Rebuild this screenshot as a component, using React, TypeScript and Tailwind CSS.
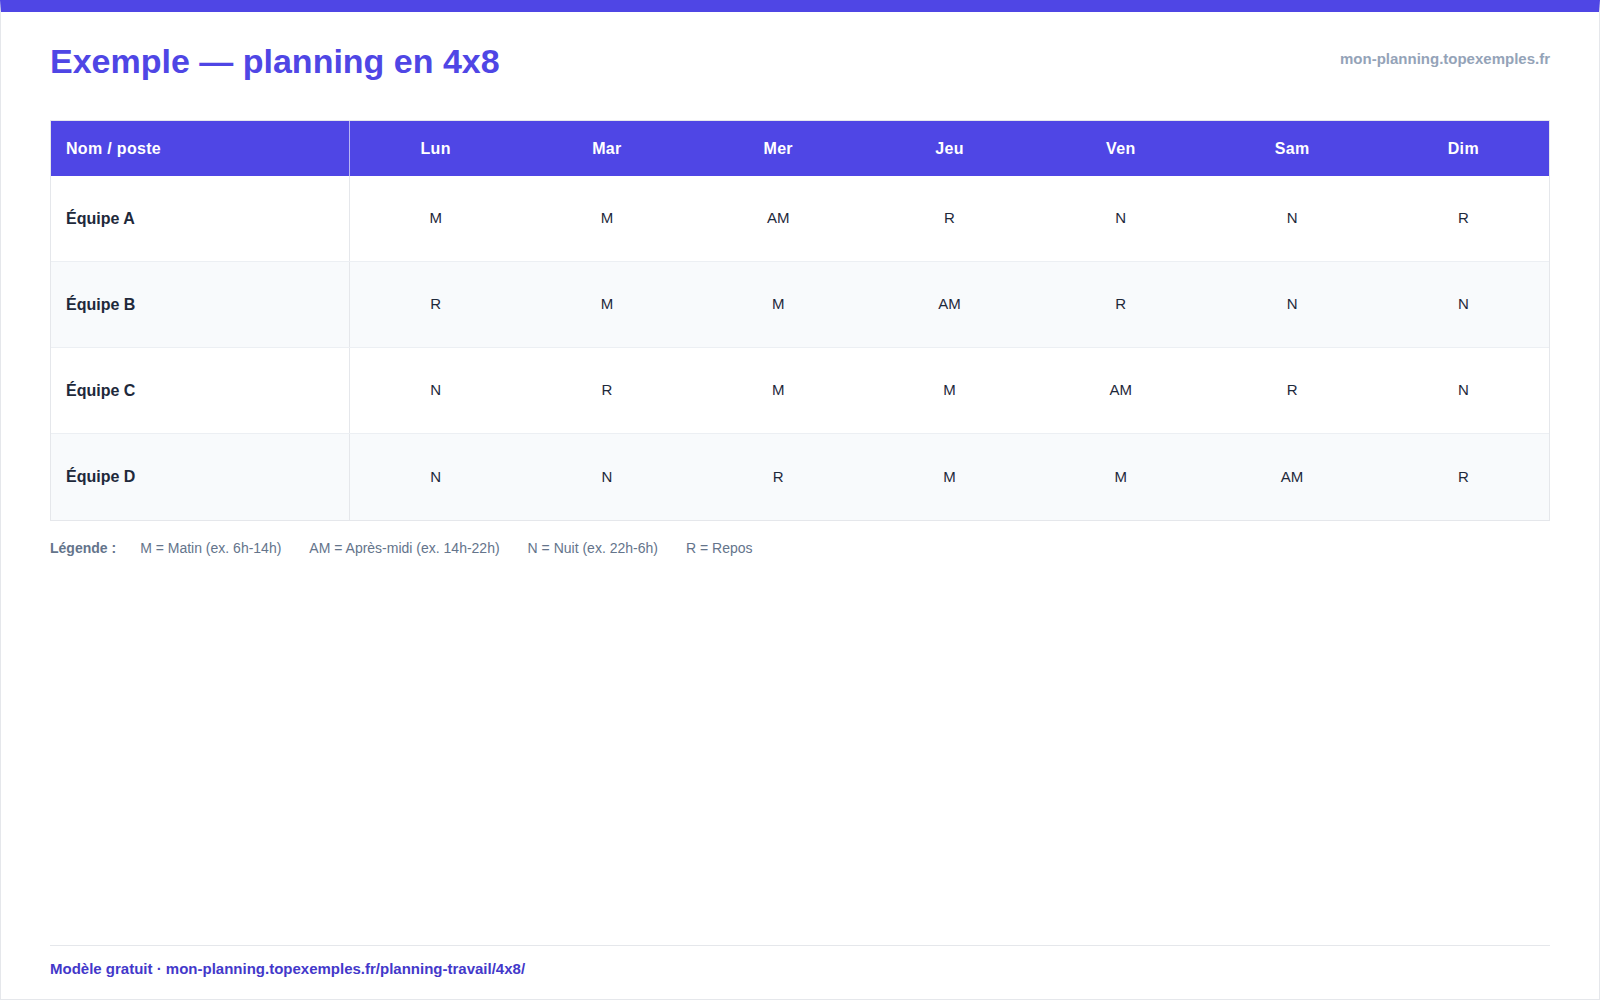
import React from "react";

const days = ["Lun", "Mar", "Mer", "Jeu", "Ven", "Sam", "Dim"];
const rows: { name: string; cells: string[] }[] = [
  { name: "Équipe A", cells: ["M", "M", "AM", "R", "N", "N", "R"] },
  { name: "Équipe B", cells: ["R", "M", "M", "AM", "R", "N", "N"] },
  { name: "Équipe C", cells: ["N", "R", "M", "M", "AM", "R", "N"] },
  { name: "Équipe D", cells: ["N", "N", "R", "M", "M", "AM", "R"] },
];

export default function App() {
  return (
    <div
      className="w-[1600px] h-[1000px] flex flex-col bg-white border border-[#e5e7eb] border-t-[12px] border-t-[#4f46e5] px-[49px]"
      style={{ fontFamily: '"Liberation Sans", Arial, sans-serif' }}
    >
      <div className="flex items-start justify-between pt-[28px]">
        <h1 className="text-[34px] leading-[42px] font-bold text-[#4f46e5]">
          Exemple — planning en 4x8
        </h1>
        <div className="mt-[8px] text-[15px] leading-[22px] font-bold text-[#94a3b8]">
          mon-planning.topexemples.fr
        </div>
      </div>

      <div className="mt-[38px] border border-[#e5e7eb]">
        <div className="grid grid-cols-[299px_repeat(7,1fr)] h-[55px] bg-[#4f46e5] text-white text-[16px] font-bold tracking-[0.02em]">
          <div className="flex items-center pl-[15px] border-r border-r-white/60">
            Nom / poste
          </div>
          {days.map((d) => (
            <div key={d} className="flex items-center justify-center">
              {d}
            </div>
          ))}
        </div>
        {rows.map((r, i) => (
          <div
            key={r.name}
            className={
              "grid grid-cols-[299px_repeat(7,1fr)] h-[86px] border-b border-[#eceff3] last:border-b-0 " +
              (i % 2 === 1 ? "bg-[#f8fafc]" : "bg-white")
            }
          >
            <div className="flex items-center pl-[15px] border-r border-r-[#e5e7eb] text-[16px] font-bold text-[#1e293b]">
              {r.name}
            </div>
            {r.cells.map((c, j) => (
              <div
                key={j}
                className="flex items-center justify-center text-[15px] text-[#1e293b]"
              >
                {c}
              </div>
            ))}
          </div>
        ))}
      </div>

      <div className="mt-[17px] flex items-center gap-[28px] text-[14px] leading-[21px] text-[#64748b]">
        <span className="font-bold -mr-[4px]">Légende :</span>
        <span>M = Matin (ex. 6h-14h)</span>
        <span>AM = Après-midi (ex. 14h-22h)</span>
        <span>N = Nuit (ex. 22h-6h)</span>
        <span>R = Repos</span>
      </div>

      <div className="mt-auto border-t border-[#e5e7eb] pt-[12px] pb-[19px] text-[15px] leading-[22px] font-bold text-[#4338ca]">
        Modèle gratuit · mon-planning.topexemples.fr/planning-travail/4x8/
      </div>
    </div>
  );
}
